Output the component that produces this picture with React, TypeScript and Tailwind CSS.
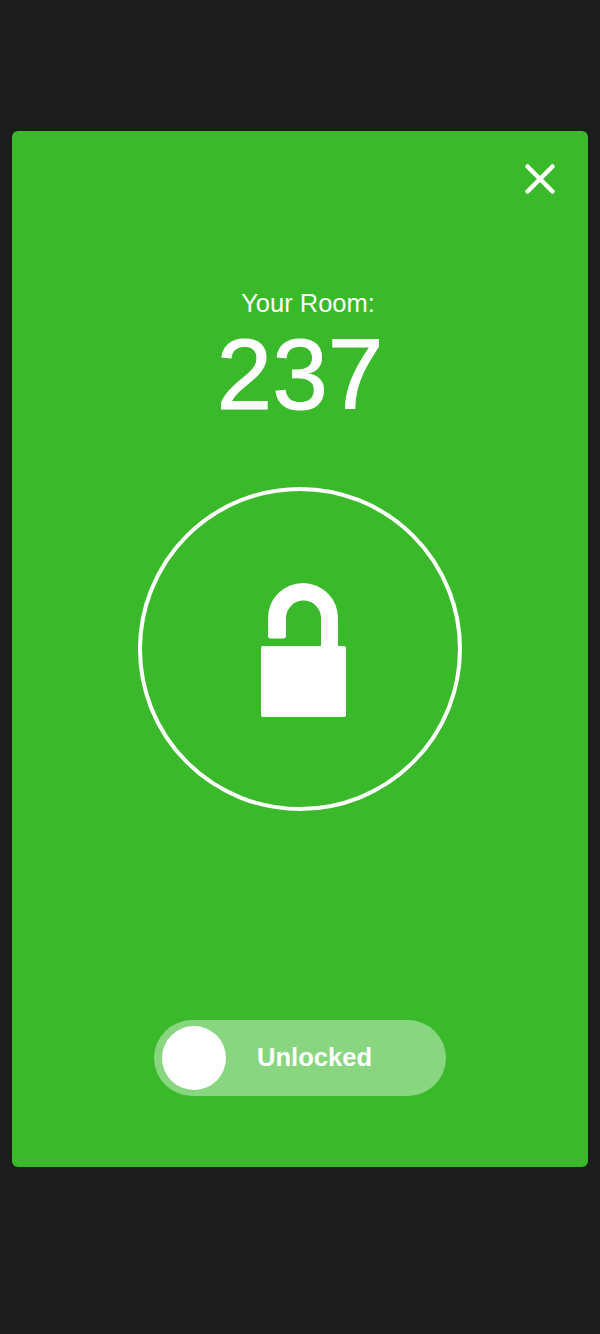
export default function App() {
  return (
    <div className="h-[1334px] w-[600px] bg-[#1c1c1c] pt-[131px] font-['Liberation_Sans',Arial,sans-serif]">
      <div className="relative mx-3 flex h-[1036px] w-[576px] flex-col items-center rounded-[6px] bg-[#3ab92b] text-white">
        <button className="absolute right-[32px] top-[32px]">
          <svg width="32" height="32" viewBox="0 0 32 32" fill="none" stroke="#fff" strokeWidth="4.5" strokeLinecap="round">
            <path d="M3.5 3.5 L28.5 28.5" />
            <path d="M28.5 3.5 L3.5 28.5" />
          </svg>
        </button>

        <p className="mt-[157px] pl-4 text-[25.5px] leading-[30px]">Your Room:</p>
        <p className="mt-[6px] text-[100px] leading-[100px] [-webkit-text-stroke:1px_white]">237</p>

        <div className="mt-[63px] flex h-[324px] w-[324px] items-center justify-center rounded-full border-4 border-white">
          <svg className="ml-[6px] mt-[1px]" width="86" height="135" viewBox="0 0 86 135" fill="#fff">
            <path d="M8 36 A35 35 0 0 1 78 36 L78 66 L61 66 L61 36 A17.5 17.5 0 0 0 26 36 L26 54 C26 55.5 25 56.5 23.5 56.5 L10.5 56.5 C9 56.5 8 55.5 8 54 Z" />
            <rect x="1" y="64" width="85" height="71" rx="2" />
          </svg>
        </div>

        <div className="mt-[209px] flex h-[76px] w-[292px] items-center rounded-full bg-[#89d681] pl-2">
          <div className="h-[64px] w-[64px] rounded-full bg-white" />
          <span className="ml-[31px] text-[25.6px] font-bold leading-none">Unlocked</span>
        </div>
      </div>
    </div>
  )
}
